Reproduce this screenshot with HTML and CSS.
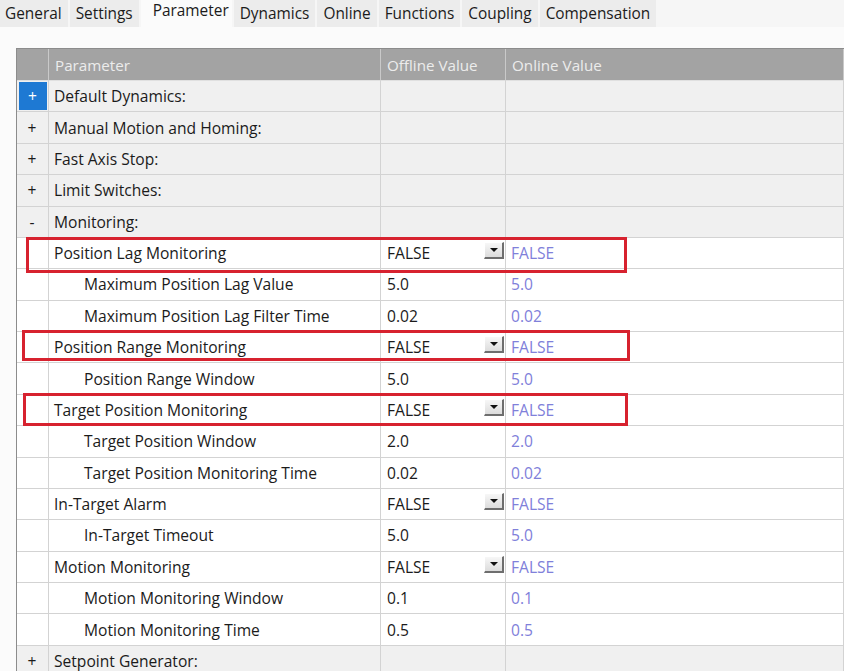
FILE: index.html
```html
<!DOCTYPE html>
<html>
<head>
<meta charset="utf-8">
<link rel="stylesheet" href="styles.css">
</head>
<body>
<div class="tabs">
  <div class="tab">General</div>
  <div class="tab">Settings</div>
  <div class="tab active">Parameter</div>
  <div class="tab">Dynamics</div>
  <div class="tab">Online</div>
  <div class="tab">Functions</div>
  <div class="tab">Coupling</div>
  <div class="tab">Compensation</div>
</div>
<div class="panel">
  <div class="table">
    <div class="row head">
      <div class="c exp"></div>
      <div class="c">Parameter</div>
      <div class="c">Offline Value</div>
      <div class="c">Online Value</div>
    </div>
    <div class="row cat">
      <div class="c exp"><span class="sel">+</span></div>
      <div class="c">Default Dynamics:</div>
      <div class="c"></div>
      <div class="c"></div>
    </div>
    <div class="row cat">
      <div class="c exp">+</div>
      <div class="c">Manual Motion and Homing:</div>
      <div class="c"></div>
      <div class="c"></div>
    </div>
    <div class="row cat">
      <div class="c exp">+</div>
      <div class="c">Fast Axis Stop:</div>
      <div class="c"></div>
      <div class="c"></div>
    </div>
    <div class="row cat">
      <div class="c exp">+</div>
      <div class="c">Limit Switches:</div>
      <div class="c"></div>
      <div class="c"></div>
    </div>
    <div class="row cat">
      <div class="c exp">-</div>
      <div class="c">Monitoring:</div>
      <div class="c"></div>
      <div class="c"></div>
    </div>
    <div class="row">
      <div class="c exp"></div>
      <div class="c">Position Lag Monitoring</div>
      <div class="c off"><span>FALSE</span><span class="drop"></span></div>
      <div class="c on">FALSE</div>
    </div>
    <div class="row">
      <div class="c exp"></div>
      <div class="c sub">Maximum Position Lag Value</div>
      <div class="c off">5.0</div>
      <div class="c on">5.0</div>
    </div>
    <div class="row">
      <div class="c exp"></div>
      <div class="c sub">Maximum Position Lag Filter Time</div>
      <div class="c off">0.02</div>
      <div class="c on">0.02</div>
    </div>
    <div class="row">
      <div class="c exp"></div>
      <div class="c">Position Range Monitoring</div>
      <div class="c off"><span>FALSE</span><span class="drop"></span></div>
      <div class="c on">FALSE</div>
    </div>
    <div class="row">
      <div class="c exp"></div>
      <div class="c sub">Position Range Window</div>
      <div class="c off">5.0</div>
      <div class="c on">5.0</div>
    </div>
    <div class="row">
      <div class="c exp"></div>
      <div class="c">Target Position Monitoring</div>
      <div class="c off"><span>FALSE</span><span class="drop"></span></div>
      <div class="c on">FALSE</div>
    </div>
    <div class="row">
      <div class="c exp"></div>
      <div class="c sub">Target Position Window</div>
      <div class="c off">2.0</div>
      <div class="c on">2.0</div>
    </div>
    <div class="row">
      <div class="c exp"></div>
      <div class="c sub">Target Position Monitoring Time</div>
      <div class="c off">0.02</div>
      <div class="c on">0.02</div>
    </div>
    <div class="row">
      <div class="c exp"></div>
      <div class="c">In-Target Alarm</div>
      <div class="c off"><span>FALSE</span><span class="drop"></span></div>
      <div class="c on">FALSE</div>
    </div>
    <div class="row">
      <div class="c exp"></div>
      <div class="c sub">In-Target Timeout</div>
      <div class="c off">5.0</div>
      <div class="c on">5.0</div>
    </div>
    <div class="row">
      <div class="c exp"></div>
      <div class="c">Motion Monitoring</div>
      <div class="c off"><span>FALSE</span><span class="drop"></span></div>
      <div class="c on">FALSE</div>
    </div>
    <div class="row">
      <div class="c exp"></div>
      <div class="c sub">Motion Monitoring Window</div>
      <div class="c off">0.1</div>
      <div class="c on">0.1</div>
    </div>
    <div class="row">
      <div class="c exp"></div>
      <div class="c sub">Motion Monitoring Time</div>
      <div class="c off">0.5</div>
      <div class="c on">0.5</div>
    </div>
    <div class="row cat">
      <div class="c exp">+</div>
      <div class="c">Setpoint Generator:</div>
      <div class="c"></div>
      <div class="c"></div>
    </div>
  </div>
  <div class="mark m1"></div>
  <div class="mark m2"></div>
  <div class="mark m3"></div>
</div>
</body>
</html>
```
FILE: styles.css
```css
html, body {
  margin: 0;
  padding: 0;
  background: #fbfbfb;
  overflow: hidden;
  height: 671px;
}
body {
  font-family: "Open Sans", "Noto Sans", sans-serif;
  font-size: 15.6px;
  color: #1b1b1b;
}
.tabs {
  display: flex;
  gap: 2px;
  height: 27px;
  background: #f6f6f6;
  align-items: stretch;
}
.tab {
  background: #ececec;
  padding: 0 6px;
  display: flex;
  align-items: center;
  font-size: 15.4px;
  line-height: 1;
  padding-top: 1px;
}
.tab:first-child {
  padding-left: 5px;
}
.tab.active {
  background: #fbfbfb;
  padding: 0 3px 5px 12px;
}
.panel {
  position: relative;
  margin: 21px 0 0 16px;
}
.table {
  border-top: 1px solid #8c8c8c;
  border-left: 1px solid #8c8c8c;
  display: flex;
  flex-direction: column;
}
.row {
  display: grid;
  grid-template-columns: 32px 332px 125px 1fr;
  height: 31.39px;
  background: #ffffff;
}
.row.head {
  height: 32px;
  background: #a3a3a3;
  color: #ececec;
  font-size: 15.2px;
}
.row.cat {
  background: #f0f0f0;
}
.c {
  box-sizing: border-box;
  border-right: 1px solid #d3d3d3;
  border-bottom: 1px solid #d3d3d3;
  display: flex;
  align-items: center;
  padding-left: 5px;
  white-space: nowrap;
  overflow: hidden;
}
.head .c {
  border-right-color: #c9c9c9;
  border-bottom-color: #e0e0e0;
  padding-left: 6px;
}
.c.exp {
  padding-left: 0;
  justify-content: center;
  padding-right: 1px;
}
.c.sub {
  padding-left: 35px;
}
.c.off {
  padding-left: 6px;
  justify-content: space-between;
  padding-right: 1px;
}
.c.on {
  color: #8080da;
}
.sel {
  box-sizing: border-box;
  width: 28px;
  height: 28px;
  margin-left: 1px;
  background: #1e79d3;
  color: #ffffff;
  display: flex;
  align-items: center;
  justify-content: center;
}
.drop {
  position: relative;
  box-sizing: border-box;
  width: 20px;
  height: 17px;
  margin-top: -5px;
  background: linear-gradient(#f7f7f7, #dcdcdc);
  border-top: 1px solid #ffffff;
  border-left: 1px solid #ffffff;
  border-right: 2px solid #6e6e6e;
  border-bottom: 2px solid #6e6e6e;
}
.drop::after {
  content: "";
  position: absolute;
  left: 5px;
  top: 5px;
  border-left: 4px solid transparent;
  border-right: 4px solid transparent;
  border-top: 4px solid #111111;
}
.mark {
  position: absolute;
  box-sizing: border-box;
  border: 3px solid #d7222f;
}
.m1 { left: 10px; top: 189px; width: 601px; height: 36px; }
.m2 { left: 6px; top: 282px; width: 608px; height: 31px; }
.m3 { left: 7px; top: 345px; width: 605px; height: 33px; }
```
